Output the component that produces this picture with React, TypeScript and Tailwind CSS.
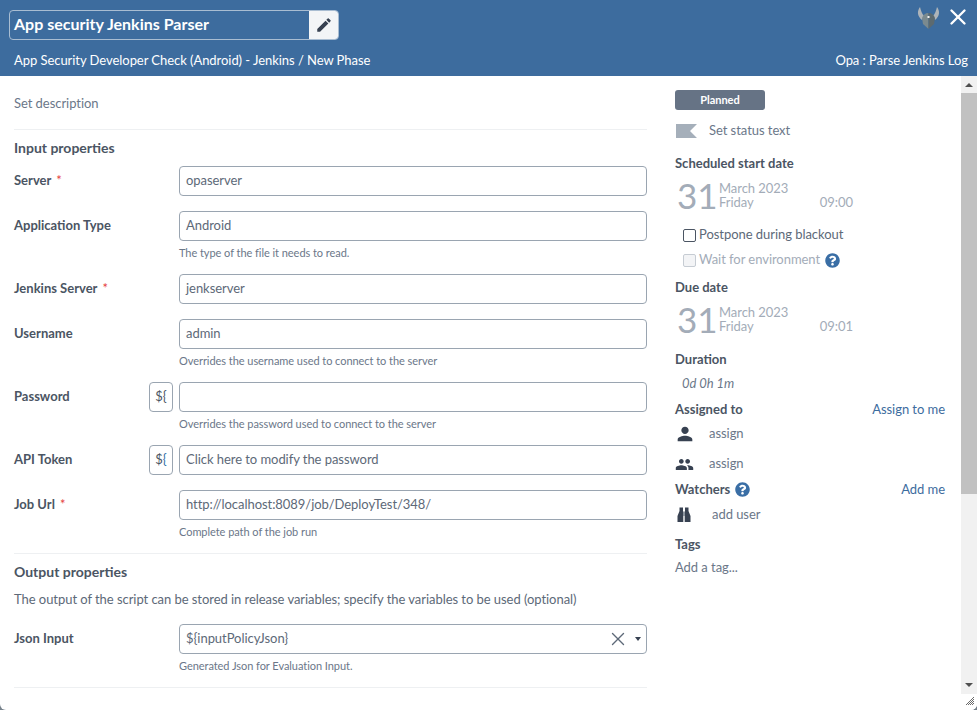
import { X } from "lucide-react";
import { FaQuestionCircle } from "react-icons/fa";
import { MdEdit, MdPerson, MdPeople } from "react-icons/md";

function Field({
  label,
  required,
  value,
  help,
  variable,
  colored,
}: {
  label: string;
  required?: boolean;
  value?: string;
  help?: string;
  variable?: boolean;
  colored?: boolean;
}) {
  return (
    <div className={help ? "mb-[6px] flex" : "mb-[15px] flex"}>
      <div className="w-[135px] shrink-0 pt-[6px] text-[13px] font-bold leading-[16px] tracking-normal text-[#4b5563]">
        {label}
        {required && <span className="ml-[5px] font-normal text-[#e53e3e]">*</span>}
      </div>
      <div className="w-[30px] shrink-0">
        {variable && (
          <div className="flex h-[30px] w-[24px] items-center justify-center rounded-[4px] border border-[#9aa5b1] text-[13px] text-[#4b5563]">
            {colored ? (
              <span>
                <span className="text-[#4b5563]">$</span>
                <span className="text-[#2f6fa8]">{"{"}</span>
              </span>
            ) : (
              "${"
            )}
          </div>
        )}
      </div>
      <div className="w-[468px]">
        <div className="flex h-[30px] items-center rounded-[4px] border border-[#9aa5b1] bg-white px-[6px] text-[13px] text-[#5d6978]">
          {value}
        </div>
        {help && <div className="h-[27px] pt-[4px] text-[11px] leading-[15px] text-[#6b7789]">{help}</div>}
      </div>
    </div>
  );
}

function SideTitle({ children }: { children: React.ReactNode }) {
  return <div className="text-[13px] font-bold leading-[16px] tracking-normal text-[#4b5563]">{children}</div>;
}

function DateBlock({ time }: { time: string }) {
  return (
    <div className="flex h-[36px] w-[178px] items-center text-[#a3acb8]">
      <span className="w-[44px] pl-[2px] text-[35px] leading-[36px]">31</span>
      <div className="text-[13px] leading-[14px]">
        <div>March 2023</div>
        <div>Friday</div>
      </div>
      <span className="ml-auto self-end pb-[4px] text-[13px] leading-[14px]">{time}</span>
    </div>
  );
}

function Help({ size }: { size: number }) {
  return <FaQuestionCircle size={size} className="text-[#3a6ea5]" />;
}

export default function App() {
  return (
    <div className="relative h-[710px] w-[977px] overflow-hidden bg-[#77828c] font-['Lato','Liberation_Sans',sans-serif] tracking-[-0.05px]">
      <div className="flex h-full flex-col overflow-hidden rounded-b-[6px] bg-white">
        <header className="flex h-[76px] shrink-0 flex-col bg-[#3d6c9e] text-white">
          <div className="flex h-[50px] items-start justify-between pl-[9px] pr-[6px] pt-[10px]">
            <div className="flex h-[30px] w-[330px] items-center overflow-hidden rounded-[4px] border border-[#a9bdd2]">
              <div className="flex-1 pb-[3px] pl-[4px] text-[16px] font-bold tracking-normal">App security Jenkins Parser</div>
              <div className="flex h-full w-[29px] items-center justify-center bg-[#f3f5f7]">
                <MdEdit size={18} className="text-[#374151]" />
              </div>
            </div>
            <div className="-mt-[6px] flex items-center gap-[4px]">
              <svg width="24" height="24" viewBox="0 0 24 24">
                <path d="M3 2 C0 6 0 11 5 15 L7 11 C5 9 4 6 3 2Z" fill="#aeb4b9" />
                <path d="M20 2 C23 6 23 11 18 15 L16 11 C18 9 19 6 20 2Z" fill="#aeb4b9" />
                <path d="M11.5 8 C8 8 6 10 5 13 L6 19 L11.5 24Z" fill="#7b8a8f" />
                <path d="M11.5 8 C15 8 17 10 18 13 L17 19 L11.5 24Z" fill="#5c6a70" />
                <rect x="10.5" y="11" width="2" height="2" fill="#f1f3f4" />
              </svg>
              <X size={26} strokeWidth={2.2} className="text-white" />
            </div>
          </div>
          <div className="flex items-center justify-between pl-[14px] pr-[9px] text-[13px] leading-[20px]">
            <span>App Security Developer Check (Android) - Jenkins / New Phase</span>
            <span>Opa : Parse Jenkins Log</span>
          </div>
        </header>

        <div className="flex min-h-0 flex-1">
          <div className="flex flex-1 pl-[14px]">
            <main className="w-[633px] shrink-0">
              <div className="h-[54px] border-b border-[#eef0f2] pt-[19px] text-[13px] leading-[16px] text-[#6b7789]">
                Set description
              </div>
              <div className="pb-[10px] pt-[10px] text-[14px] font-bold leading-[16px] tracking-normal text-[#4b5563]">Input properties</div>
              <div>
                <Field label="Server" required value="opaserver" />
                <Field label="Application Type" value="Android" help="The type of the file it needs to read." />
                <Field label="Jenkins Server" required value="jenkserver" />
                <Field label="Username" value="admin" help="Overrides the username used to connect to the server" />
                <Field label="Password" variable help="Overrides the password used to connect to the server" />
                <Field label="API Token" variable colored value="Click here to modify the password" />
                <Field label="Job Url" required value="http://localhost:8089/job/DeployTest/348/" help="Complete path of the job run" />
              </div>
              <div className="border-t border-[#eef0f2] pt-[10px] text-[14px] font-bold leading-[16px] tracking-normal text-[#4b5563]">
                Output properties
              </div>
              <div className="pt-[11px] text-[13px] leading-[16px] text-[#5d6978]">
                The output of the script can be stored in release variables; specify the variables to be used (optional)
              </div>
              <div className="mt-[17px] flex">
                <div className="w-[165px] shrink-0 pt-[6px] text-[13px] font-bold leading-[16px] tracking-normal text-[#4b5563]">Json Input</div>
                <div className="w-[468px]">
                  <div className="flex h-[30px] items-center rounded-[4px] border border-[#9aa5b1] pl-[6px] pr-[5px] text-[13px] text-[#5d6978]">
                    <span className="flex-1">{"${inputPolicyJson}"}</span>
                    <X size={22} strokeWidth={1.5} className="mr-[6px] text-[#5d6978]" />
                    <span className="h-0 w-0 border-x-[3px] border-t-[4px] border-x-transparent border-t-[#374151]" />
                  </div>
                  <div className="pt-[4px] text-[11px] leading-[15px] text-[#6b7789]">Generated Json for Evaluation Input.</div>
                </div>
              </div>
              <div className="mt-[14px] border-t border-[#eef0f2]" />
            </main>

            <aside className="ml-[28px] w-[270px] shrink-0 pt-[14px]">
              <div className="flex h-[20px] w-[90px] items-center justify-center rounded-[3px] bg-[#667385] text-[11px] font-bold text-white">
                Planned
              </div>
              <div className="mt-[12px] flex h-[18px] items-center text-[13px] text-[#6b7789]">
                <svg width="21" height="14" viewBox="0 0 21 14" className="ml-[1px]">
                  <path d="M0 0 H21 L14 7 L21 14 H0Z" fill="#a5afba" />
                </svg>
                <span className="ml-[12px]">Set status text</span>
              </div>
              <div className="mt-[15px]">
                <SideTitle>Scheduled start date</SideTitle>
              </div>
              <div className="mt-[6px]">
                <DateBlock time="09:00" />
              </div>
              <div className="ml-[8px] mt-[13px] flex h-[18px] items-center text-[13px] text-[#5d6978]">
                <span className="h-[13px] w-[13px] rounded-[2px] border border-[#4b5563] bg-white" />
                <span className="ml-[3px]">Postpone during blackout</span>
              </div>
              <div className="ml-[8px] mt-[7px] flex h-[18px] items-center text-[13px] text-[#a3acb8]">
                <span className="h-[13px] w-[13px] rounded-[2px] border border-[#c6ccd3] bg-[#f3f4f6]" />
                <span className="ml-[3px] mr-[5px]">Wait for environment</span>
                <Help size={15} />
              </div>
              <div className="mt-[10px]">
                <SideTitle>Due date</SideTitle>
              </div>
              <div className="mt-[6px]">
                <DateBlock time="09:01" />
              </div>
              <div className="mt-[14px]">
                <SideTitle>Duration</SideTitle>
              </div>
              <div className="ml-[7px] mt-[8px] text-[13px] italic leading-[16px] text-[#6b7789]">0d 0h 1m</div>
              <div className="mt-[10px] flex items-center justify-between">
                <SideTitle>Assigned to</SideTitle>
                <span className="text-[13px] leading-[16px] text-[#3d6c9e]">Assign to me</span>
              </div>
              <div className="mt-[8px] flex h-[18px] items-center text-[13px] text-[#6b7789]">
                <span className="flex w-[34px] shrink-0">
                  <MdPerson size={22} className="-ml-[1px] text-[#374151]" />
                </span>
                <span>assign</span>
              </div>
              <div className="mt-[12px] flex h-[18px] items-center text-[13px] text-[#6b7789]">
                <span className="flex w-[34px] shrink-0">
                  <MdPeople size={19} className="text-[#374151]" />
                </span>
                <span>assign</span>
              </div>
              <div className="mt-[8px] flex items-center justify-between">
                <div className="flex items-center gap-[5px]">
                  <SideTitle>Watchers</SideTitle>
                  <Help size={15} />
                </div>
                <span className="text-[13px] leading-[16px] text-[#3d6c9e]">Add me</span>
              </div>
              <div className="mt-[9px] flex h-[18px] items-center text-[13px] text-[#6b7789]">
                <svg width="14" height="16" viewBox="0 0 14 16" className="ml-[2px]" fill="#374151">
                  <path d="M2.5 0.5 H6 V4 H6.3 V15 H0.5 V9 L2.5 4Z" />
                  <path d="M11.5 0.5 H8 V4 H7.7 V15 H13.5 V9 L11.5 4Z" />
                  <rect x="6" y="5" width="2" height="4" fill="#8a939e" />
                </svg>
                <span className="ml-[21px]">add user</span>
              </div>
              <div className="mt-[12px]">
                <SideTitle>Tags</SideTitle>
              </div>
              <div className="mt-[7px] text-[13px] leading-[16px] text-[#6b7789]">Add a tag...</div>
            </aside>
          </div>

          <div className="flex w-[16px] shrink-0 flex-col items-center bg-[#f1f1f1]">
            <div className="flex h-[17px] items-center justify-center">
              <span className="h-0 w-0 border-x-[4px] border-b-[4px] border-x-transparent border-b-[#505050]" />
            </div>
            <div className="h-[401px] w-full bg-[#c1c1c1]" />
            <div className="flex-1" />
            <div className="flex h-[18px] items-center justify-center">
              <span className="h-0 w-0 border-x-[4px] border-t-[4px] border-x-transparent border-t-[#505050]" />
            </div>
            <div className="h-[16px] w-full bg-white" />
          </div>
        </div>
      </div>

      <svg width="8" height="8" viewBox="0 0 8 8" className="absolute bottom-[5px] right-[3px]">
        <path d="M0 8 L8 0 M2 8 L8 2 M4 8 L8 4 M6 8 L8 6" stroke="#6b6b6b" strokeWidth="1" />
      </svg>
    </div>
  );
}
